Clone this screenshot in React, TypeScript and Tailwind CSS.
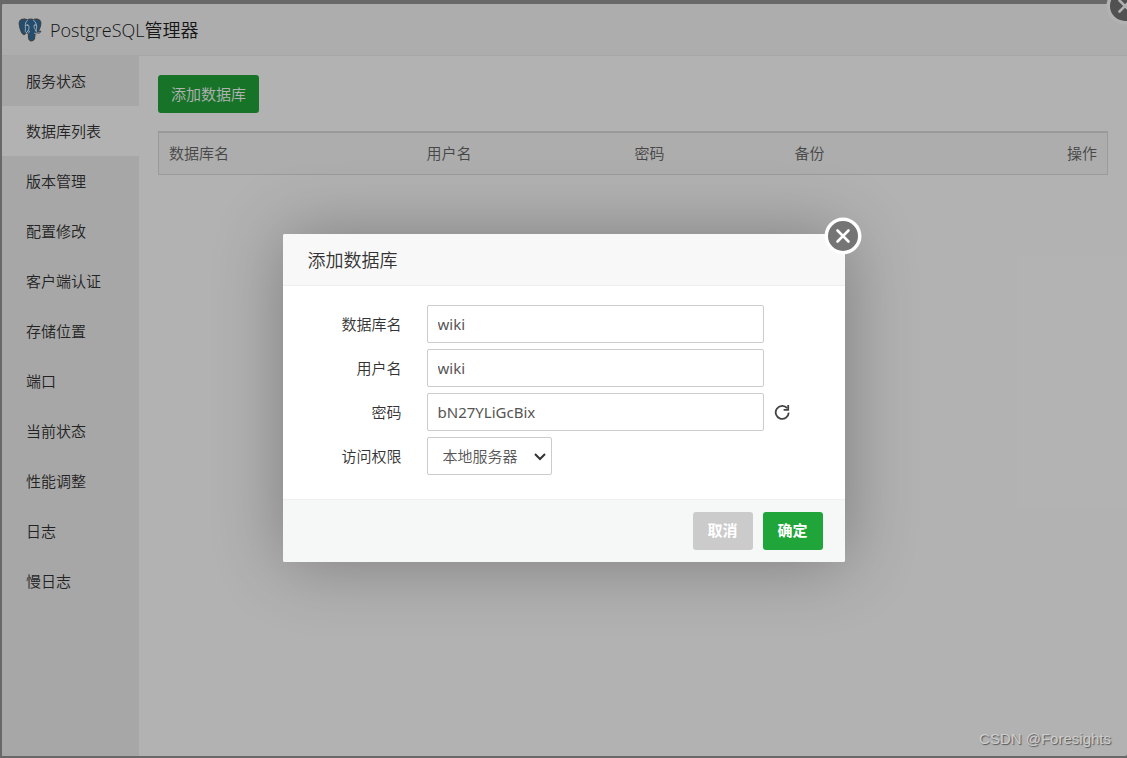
import React from 'react';

interface CloseButtonProps {
  label: string;
}

interface FieldProps {
  id: string;
  label: string;
  children: React.ReactNode;
}

interface Column {
  title: string;
  className: string;
}

const menuItems: string[] = [
  '服务状态',
  '数据库列表',
  '版本管理',
  '配置修改',
  '客户端认证',
  '存储位置',
  '端口',
  '当前状态',
  '性能调整',
  '日志',
  '慢日志',
];

const columns: Column[] = [
  { title: '数据库名', className: 'w-[258px] text-left' },
  { title: '用户名', className: 'w-[208px] text-left' },
  { title: '密码', className: 'w-40 text-left' },
  { title: '备份', className: 'text-left' },
  { title: '操作', className: 'text-right' },
];

const controlClass =
  "h-[38px] rounded-xs border border-[#ccc] bg-white font-['Noto_Sans','Noto_Sans_CJK_SC',sans-serif] text-[15px] text-[#555] outline-none";

const PostgresLogo: React.FC = () => (
  <svg viewBox="0 0 24 24" className="size-6" strokeLinecap="round" strokeLinejoin="round">
    <path
      d="M6.4 1.2C3 .6 1 2.4 1.2 5.8c.2 3 1.6 8.2 3.4 10.2 1 1.1 2 .8 2.8-.1l1-1.1c.6.4 1.3.5 2 .4-.1 1.4-.1 3.8.2 5.3.3 1.8 1.5 2.7 3.2 2.4 1.8-.3 2.7-1.3 2.9-3.1l.4-4.3c1.9.4 4-.1 5.3-1.2.8-.8.4-1.3-.6-1.2-.6.1-1.2.1-1.5 0 1.5-2.3 2.5-5.3 2.6-7.9C23 2.4 20.9.9 18 1c-1 0-1.9.2-2.7.5C13.4.9 11.3.9 9.7 1.7 8.7 1.4 7.5 1.2 6.4 1.2z"
      fill="#336fa0"
      stroke="#555"
      strokeWidth="1"
    />
    <g fill="none" stroke="#fff" strokeWidth="0.9">
      <path d="M9.5 2.2C7.7 3.7 7.2 6 7.3 8.5c0 1.5.4 2.5 0 4.2-.1 1 .4 1.8 1.2 2.1" />
      <path d="M15.3 2c2.2 1.6 3.3 4.2 3.4 6.8.1 2-1 3.3-.5 5.2" />
      <path d="M7.6 7.4c1.2-.8 3-.7 3.3.6.3 1.8 0 3.6-1 5l-1.2 1.5" />
      <path d="M17.8 7c-1-.3-2 .1-1.9 1.2.2 1.7 1.3 3 2 4.6" />
      <path d="M10.6 14.8c1.2-.7 1.3-1.8.2-2M16.5 15.3c1.5.4 3.4.1 4.6-.7" />
    </g>
    <circle cx="9.4" cy="7.3" r=".7" fill="#fff" />
    <circle cx="17" cy="7.2" r=".6" fill="#fff" />
  </svg>
);

const CloseButton: React.FC<CloseButtonProps> = ({ label }) => (
  <button type="button" aria-label={label} className="absolute -top-[17px] -right-[17px] size-[38px] rounded-full">
    <svg viewBox="0 0 38 38" className="size-full">
      <circle cx="19" cy="19" r="18.5" fill="#fff" />
      <circle cx="19" cy="19" r="15" fill="#757575" />
      <path d="M13.5 13.5l11 11M24.5 13.5l-11 11" stroke="#fff" strokeWidth="2.6" strokeLinecap="round" />
    </svg>
  </button>
);

const Field: React.FC<FieldProps> = ({ id, label, children }) => (
  <div className="flex items-center">
    <label htmlFor={id} className="mr-[25px] w-[119px] text-right text-[15px] text-[#333]">
      {label}
    </label>
    {children}
  </div>
);

const Sidebar: React.FC = () => (
  <nav className="w-[137px] shrink-0 bg-[#f0f0f0]">
    <ul>
      {menuItems.map((item) => (
        <li key={item}>
          <a
            href="#"
            className={`block h-[50px] pl-6 text-[15px] leading-[50px] text-[#333] ${
              item === '数据库列表' ? 'bg-white' : ''
            }`}
          >
            {item}
          </a>
        </li>
      ))}
    </ul>
  </nav>
);

const DatabaseList: React.FC = () => (
  <main className="flex-1 p-[19px]">
    <button type="button" className="h-[38px] rounded-[3px] bg-[#20a53a] px-[13px] text-[15px] text-white">
      添加数据库
    </button>
    <table className="mt-[18px] w-full table-fixed border border-t-2 border-[#ddd] bg-[#f8f8f8]">
      <thead>
        <tr className="h-[42px]">
          {columns.map((column) => (
            <th key={column.title} className={`px-2.5 text-[15px] font-[350] text-[#666] ${column.className}`}>
              {column.title}
            </th>
          ))}
        </tr>
      </thead>
    </table>
  </main>
);

const AddDatabaseDialog: React.FC = () => (
  <div
    role="dialog"
    aria-labelledby="dialog-title"
    className="relative w-[562px] rounded-xs bg-white shadow-[1px_1px_70px_rgba(0,0,0,0.3)]"
  >
    <h2
      id="dialog-title"
      className="h-[52px] rounded-t-xs border-b border-[#eee] bg-[#f8f8f8] pl-[25px] text-lg leading-[52px] font-[350] text-[#333]"
    >
      添加数据库
    </h2>
    <CloseButton label="关闭" />
    <form>
      <div className="flex flex-col gap-1.5 pt-[19px] pb-6">
        <Field id="db-name" label="数据库名">
          <input id="db-name" type="text" defaultValue="wiki" className={`${controlClass} w-[337px] px-2.5 font-normal`} />
        </Field>
        <Field id="db-user" label="用户名">
          <input id="db-user" type="text" defaultValue="wiki" className={`${controlClass} w-[337px] px-2.5 font-normal`} />
        </Field>
        <Field id="db-password" label="密码">
          <input
            id="db-password"
            type="text"
            defaultValue="bN27YLiGcBix"
            className={`${controlClass} w-[337px] px-2.5 font-normal`}
          />
          <button type="button" aria-label="刷新" className="ml-2.5 text-[#444]">
            <svg viewBox="0 0 16 16" className="size-4" fill="none" stroke="currentColor" strokeWidth="1.8">
              <path d="M13.2 4.2A6.5 6.5 0 1 0 14.7 8.6" />
              <path d="M14.2 1v4.8H9.6" />
            </svg>
          </button>
        </Field>
        <Field id="db-access" label="访问权限">
          <span className="relative">
            <select id="db-access" className={`${controlClass} w-[125px] appearance-none pl-[15px]`}>
              <option>本地服务器</option>
            </select>
            <svg
              viewBox="0 0 12 8"
              className="pointer-events-none absolute top-4 right-1.5 h-2 w-3"
              fill="none"
              stroke="#333"
              strokeWidth="2"
            >
              <path d="M1 1l5 5 5-5" />
            </svg>
          </span>
        </Field>
      </div>
      <div className="flex justify-end gap-2.5 rounded-b-xs border-t border-[#edf1f0] bg-[#f6f8f8] py-3 pr-[22px]">
        <button type="button" className="h-[38px] w-[60px] rounded-[3px] bg-[#cbcbcb] pb-0.5 text-[15px] font-bold text-white">
          取消
        </button>
        <button type="submit" className="h-[38px] w-[60px] rounded-[3px] bg-[#20a53a] pb-0.5 text-[15px] font-bold text-white">
          确定
        </button>
      </div>
    </form>
  </div>
);

const App: React.FC = () => {
  return (
    <div className="relative flex min-h-screen flex-col overflow-hidden bg-[#979597] pt-1 pb-0.5 pl-0.5 font-['Open_Sans','Noto_Sans_CJK_SC',sans-serif] font-[350]">
      <div className="relative flex flex-1 flex-col rounded-xs bg-white">
        <header className="flex h-[52px] items-center gap-2 rounded-t-xs border-b border-[#eee] bg-[#f8f8f8] pl-4">
          <PostgresLogo />
          <h1 className="text-lg font-[350] text-[#222]">PostgreSQL管理器</h1>
        </header>
        <CloseButton label="关闭管理器" />
        <div className="flex flex-1">
          <Sidebar />
          <DatabaseList />
        </div>
      </div>

      <div className="absolute inset-0 flex items-center justify-center bg-black/30 pt-[38px]">
        <AddDatabaseDialog />
      </div>

      <p className="absolute right-4 bottom-[9px] font-['Liberation_Sans',sans-serif] text-[15px] leading-5 text-[#cecece] [text-shadow:1px_1px_1px_#555]">
        CSDN @Foresights
      </p>
    </div>
  );
};

export default App;
